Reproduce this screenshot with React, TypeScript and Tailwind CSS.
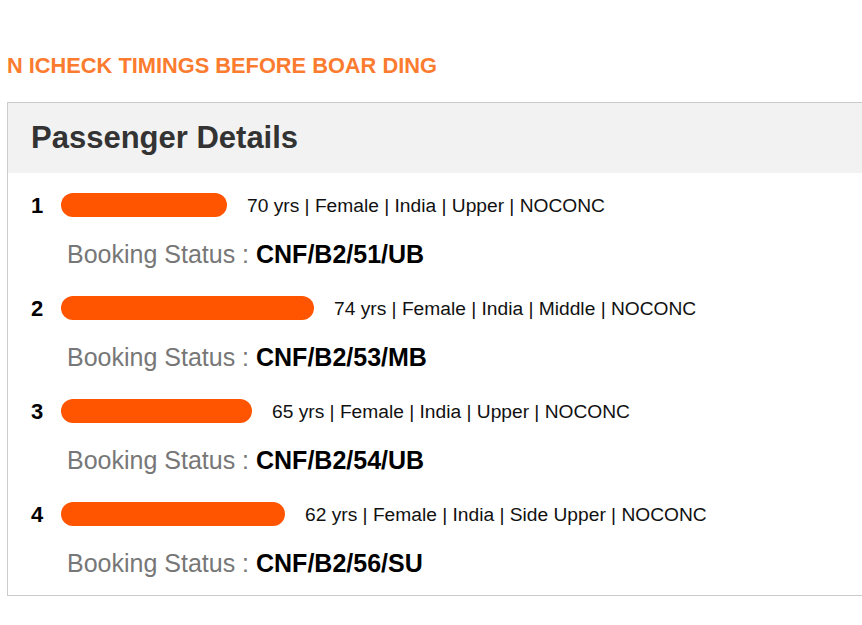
import React from "react";

const rows = [
  { n: 1, blob: 166, details: "70 yrs | Female | India | Upper | NOCONC", status: "CNF/B2/51/UB" },
  { n: 2, blob: 253, details: "74 yrs | Female | India | Middle | NOCONC", status: "CNF/B2/53/MB" },
  { n: 3, blob: 191, details: "65 yrs | Female | India | Upper | NOCONC", status: "CNF/B2/54/UB" },
  { n: 4, blob: 224, details: "62 yrs | Female | India | Side Upper | NOCONC", status: "CNF/B2/56/SU" },
];

export default function App() {
  return (
    <div className="w-[862px] h-[625px] overflow-hidden bg-white font-['Liberation_Sans',Arial,sans-serif] pt-[55px]">
      <div className="pl-[7px] text-[21.8px] leading-[22px] font-bold text-[#fb7b2f]">
        N ICHECK TIMINGS BEFORE BOAR DING
      </div>
      <div className="ml-[7px] mt-[25px] w-[900px] border border-[#cccccc]">
        <div className="h-[70px] bg-[#f2f2f2] flex items-center pl-[23px]">
          <span className="text-[31px] font-bold text-[#333333]">Passenger Details</span>
        </div>
        <div className="flex flex-col gap-[23px] pt-[17px] pb-[16px]">
          {rows.map((r) => (
            <div key={r.n} className="flex flex-col gap-[20px]">
              <div className="h-[30px] flex items-center pl-[23px]">
                <span className="w-[31px] text-[22px] font-bold text-black">{r.n}</span>
                <span
                  className="h-[24px] rounded-full bg-[#ff5500] -ml-[1px]"
                  style={{ width: r.blob }}
                />
                <span className="ml-[20px] text-[19.2px] text-[#111111] pt-[2px]">{r.details}</span>
              </div>
              <div className="h-[30px] flex items-center pl-[59px] text-[25px]">
                <span className="text-[#777777]">Booking Status :&nbsp;</span>
                <span className="font-bold text-black">{r.status}</span>
              </div>
            </div>
          ))}
        </div>
      </div>
    </div>
  );
}
